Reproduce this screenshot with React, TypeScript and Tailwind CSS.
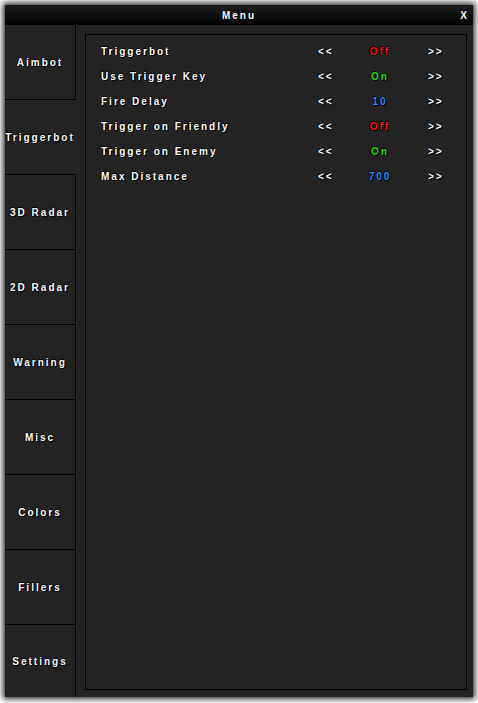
import React from "react";

const tabs = ["Aimbot", "Triggerbot", "3D Radar", "2D Radar", "Warning", "Misc", "Colors", "Fillers", "Settings"];

const rows: { label: string; value: string; color: string }[] = [
  { label: "Triggerbot", value: "Off", color: "text-[#ff1010]" },
  { label: "Use Trigger Key", value: "On", color: "text-[#10e010]" },
  { label: "Fire Delay", value: "10", color: "text-[#1e8fff]" },
  { label: "Trigger on Friendly", value: "Off", color: "text-[#ff1010]" },
  { label: "Trigger on Enemy", value: "On", color: "text-[#10e010]" },
  { label: "Max Distance", value: "700", color: "text-[#1e8fff]" },
];

const font = "font-['Liberation_Sans',Arial,sans-serif] font-bold text-[10px] tracking-[2px] [text-shadow:1px_1px_0_#000,-1px_0_0_#000,0_-1px_0_#000]";

export default function App() {
  return (
    <div className="w-[478px] h-[703px] bg-white p-[5px] pb-[6px] pr-[5px]">
      <div className="w-[468px] h-[692px] flex flex-col bg-[#232323] shadow-[0_0_6px_2px_rgba(0,0,0,0.85)]">
        <div className="h-[20px] shrink-0 bg-[linear-gradient(#1d1d1d,#000)] flex items-center relative">
          <div className={`flex-1 text-center text-white ${font}`}>Menu</div>
          <div className={`absolute right-[6px] top-[3px] text-white ${font} tracking-normal`}>X</div>
        </div>
        <div className="flex-1 flex min-h-0">
          <div className="w-[71px] shrink-0 flex flex-col">
            {tabs.map((t, i) => {
              const active = i === 1;
              const last = i === tabs.length - 1;
              return (
                <div
                  key={t}
                  className={`${last ? "flex-1" : "h-[75px]"} flex items-center justify-center text-white ${font} ${
                    active ? "border-r border-r-transparent" : "border-r border-r-black"
                  } ${last ? "" : "border-b border-b-black"}`}
                >
                  {t}
                </div>
              );
            })}
          </div>
          <div className="flex-1 pt-[9px] pl-[9px] pr-[6px] pb-[7px] flex">
            <div className="flex-1 border border-black bg-[#232323] pt-[9px] pl-[15px]">
              {rows.map((r) => (
                <div key={r.label} className={`h-[25px] flex items-start text-white ${font}`}>
                  <div className="w-[217px]">{r.label}</div>
                  <div className="w-[35px] tracking-[2px]">&lt;&lt;</div>
                  <div className={`w-[54px] text-center ${r.color}`}>{r.value}</div>
                  <div className="ml-[21px] tracking-[2px]">&gt;&gt;</div>
                </div>
              ))}
            </div>
          </div>
        </div>
      </div>
    </div>
  );
}
